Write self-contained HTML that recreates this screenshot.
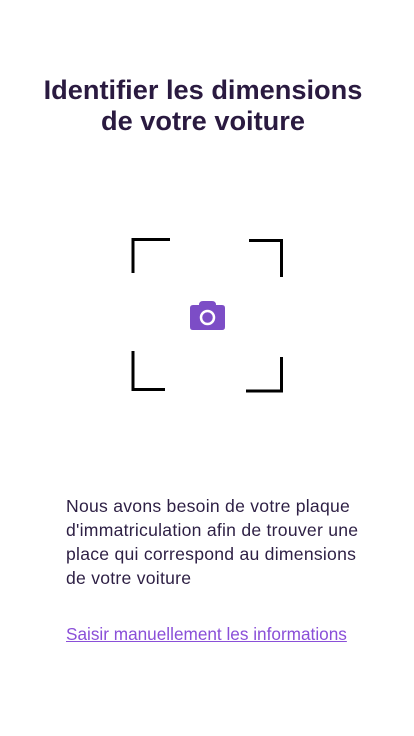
<!DOCTYPE html>
<html><head><meta charset="utf-8"><style>
html,body{margin:0;padding:0;background:#fff;width:414px;height:736px;overflow:hidden;position:relative;font-family:"Liberation Sans",sans-serif}
.t{position:absolute;left:-4px;width:414px;text-align:center;font-weight:bold;font-size:27.2px;color:#2a1a40;line-height:31px;top:74px;white-space:nowrap}
.b{position:absolute;left:66px;top:494px;font-size:17.6px;letter-spacing:0.25px;line-height:24px;color:#2d1f44;white-space:nowrap}
.l{position:absolute;left:66px;top:624px;font-size:17.2px;color:#8a4fd8;text-decoration:underline;white-space:nowrap}
</style></head><body>
<div class="t">Identifier les dimensions<br>de votre voiture</div>
<svg style="position:absolute;left:0;top:0" width="414" height="736">
<g stroke="#000" stroke-width="3" fill="none">
<path d="M133 273V239.5H170"/>
<path d="M249 240.5H281.5V277"/>
<path d="M133 351V389.5H165"/>
<path d="M281.5 357V391H246"/>
</g>
<path d="M199 305q0-4 4-4h9q4 0 4 4h6q3 0 3 3v19q0 3-3 3h-29q-3 0-3-3v-19q0-3 3-3z" fill="#7c4dc6"/>
<circle cx="207.5" cy="317.5" r="6.5" fill="none" stroke="#fff" stroke-width="2.5"/>
</svg>
<div class="b">Nous avons besoin de votre plaque<br>d'immatriculation afin de trouver une<br>place qui correspond au dimensions<br>de votre voiture</div>
<div class="l">Saisir manuellement les informations</div>
</body></html>
